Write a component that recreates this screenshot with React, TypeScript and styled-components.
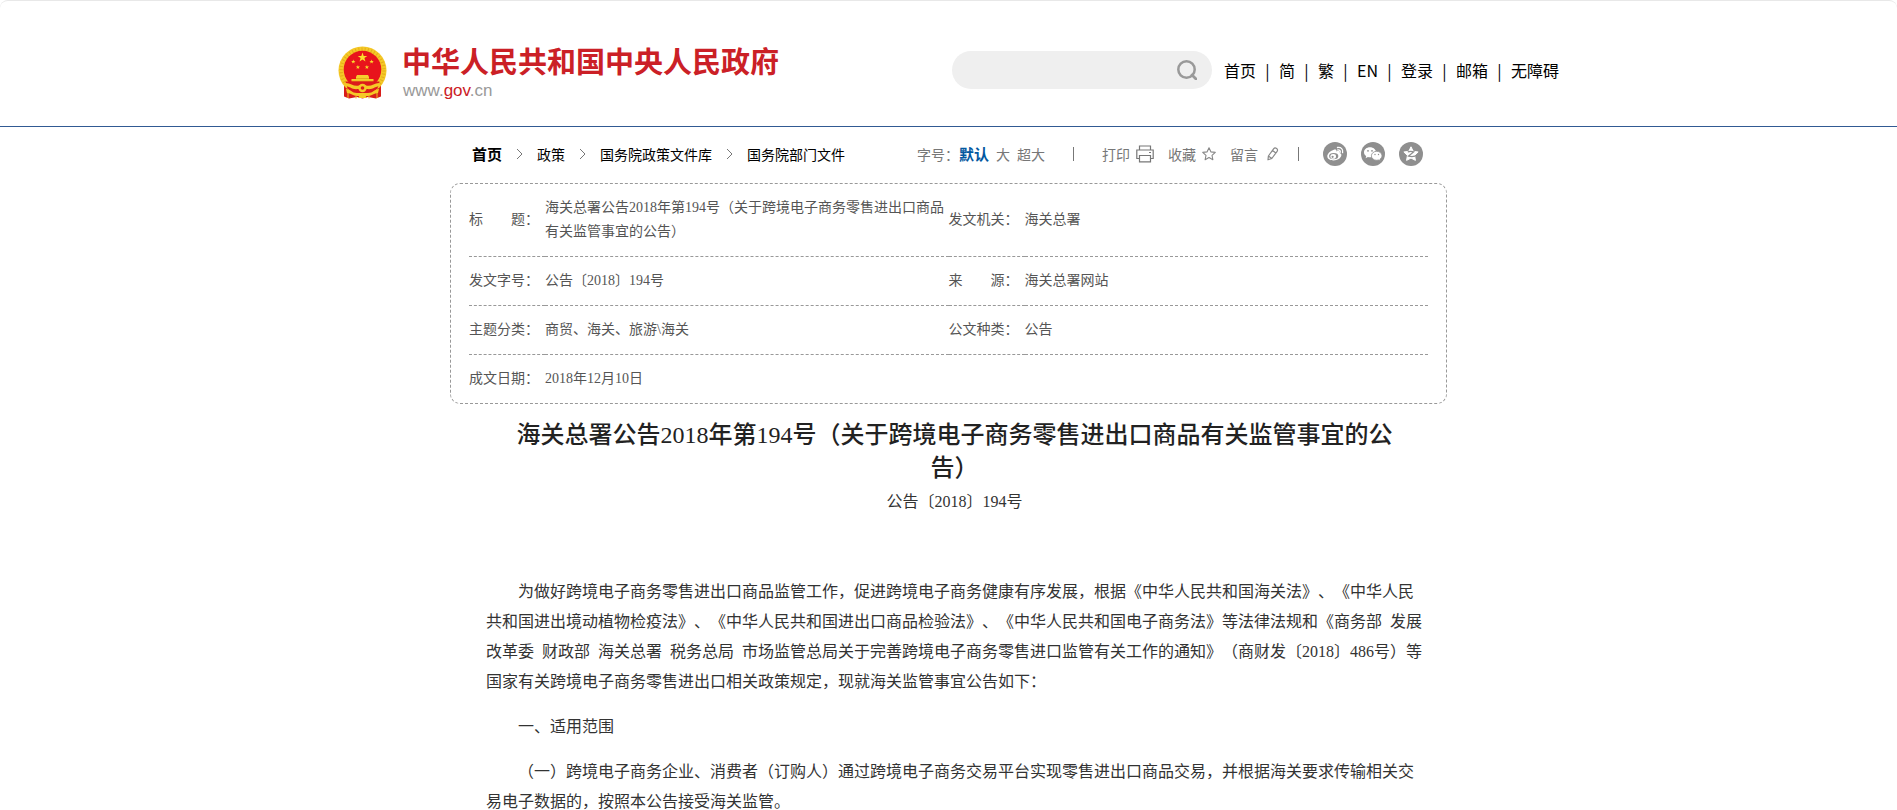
import React from 'react';
import styled, { createGlobalStyle } from 'styled-components';

const songti = `"Liberation Serif", "Noto Sans CJK SC", serif`;
const heiti = `"Noto Sans CJK SC", sans-serif`;

const GlobalStyle = createGlobalStyle`
  *, *::before, *::after { box-sizing: border-box; }
  body {
    margin: 0;
    background: #fff;
    color: #333;
    font-family: ${songti};
    text-spacing-trim: space-all;
  }
  a { color: inherit; text-decoration: none; }
  button, input {
    padding: 0;
    border: 0;
    background: none;
    color: inherit;
    font: inherit;
  }
  button { cursor: pointer; }
  h1, p { margin: 0; }
`;

const Page = styled.div`
  border-top: 1px solid #e8e8e8;
  border-top-left-radius: 8px;
  border-top-right-radius: 8px;
`;

const Header = styled.header`
  border-bottom: 1px solid #315a93;
`;

const HeaderInner = styled.div`
  display: flex;
  align-items: center;
  max-width: 1221px;
  height: 125px;
  margin: 0 auto;
  padding-top: 13px;
`;

const Brand = styled.a`
  display: flex;
  align-items: center;
  gap: 15px;
  padding-top: 5px;
`;

const BrandText = styled.span`
  display: flex;
  flex-direction: column;
  gap: 2px;
`;

const BrandName = styled.span`
  color: #cb2026;
  font: 700 29px/34px ${heiti};
`;

const BrandUrl = styled.span`
  padding-left: 1px;
  color: #999;
  font: 17px/24px "Liberation Sans", Arial, sans-serif;

  b { color: #cb2026; font-weight: 400; }
`;

const Search = styled.form`
  display: flex;
  align-items: center;
  width: 260px;
  height: 38px;
  margin-left: auto;
  padding: 0 15px;
  border-radius: 19px;
  background: #efefef;
`;

const SearchInput = styled.input`
  flex: 1;
  min-width: 0;
  outline: 0;
  font: 16px/24px ${heiti};
`;

const SearchButton = styled.button`
  display: flex;
`;

const TopNav = styled.nav`
  display: flex;
  margin-left: 12px;
  color: #000;
  font: 16px/24px ${heiti};
`;

const NavDivider = styled.span`
  width: 23px;
  text-align: center;
`;

const Main = styled.main`
  max-width: 997px;
  margin: 0 auto;
`;

const Toolbar = styled.div`
  display: flex;
  align-items: center;
  justify-content: space-between;
  height: 56px;
  padding: 0 24px 3px 22px;
  font: 14px/24px ${heiti};
`;

const Breadcrumb = styled.nav`
  display: flex;
  align-items: center;
  gap: 14px;
  color: #000;
`;

const Crumb = styled.a<{ $home?: boolean }>`
  font-size: ${(p) => (p.$home ? 15 : 14)}px;
  font-weight: ${(p) => (p.$home ? 700 : 400)};
`;

const Tools = styled.div`
  display: flex;
  align-items: center;
  color: #777;
`;

const SizeGroup = styled.div`
  display: flex;
  gap: 7px;
`;

const SizeLabel = styled.span`
  width: 35px;
  white-space: nowrap;
`;

const SizeButton = styled.button<{ $active?: boolean }>`
  color: ${(p) => (p.$active ? '#0358a0' : 'inherit')};
  font-size: ${(p) => (p.$active ? 15 : 14)}px;
  font-weight: ${(p) => (p.$active ? 700 : 400)};
`;

const ToolDivider = styled.span<{ $gap: number }>`
  width: 1px;
  height: 14px;
  margin: 0 ${(p) => p.$gap}px 0 28px;
  background: #777;
`;

const ActionGroup = styled.div`
  display: flex;
  gap: 14px;
  margin-right: -10px;
`;

const ActionButton = styled.button`
  display: flex;
  align-items: center;
  gap: 6px;
`;

const ShareGroup = styled.div`
  display: flex;
  gap: 14px;
`;

const ShareLink = styled.a`
  display: flex;
`;

const InfoCard = styled.section`
  padding: 0 18px;
  border: 1px dashed #999;
  border-radius: 10px;
`;

const InfoTable = styled.table`
  width: 100%;
  table-layout: fixed;
  border-collapse: collapse;
  color: #555;
  font: 14px/24px ${songti};

  tr:not(:last-child) > * { border-bottom: 1px dashed #999; }
`;

const InfoLabel = styled.th`
  width: 76px;
  padding: 12px 0;
  font-weight: 400;
  text-align: left;
  white-space: nowrap;
`;

const InfoValue = styled.td`
  padding: 12px 0;
`;

const Article = styled.article`
  padding: 15px 24px 30px 36px;
`;

const Title = styled.h1`
  padding: 0 20px;
  color: #222;
  font: 500 24px/33px ${songti};
  text-align: center;
`;

const DocNumber = styled.p`
  font-size: 16px;
  line-height: 33px;
  text-align: center;
`;

const Content = styled.div`
  display: flex;
  flex-direction: column;
  gap: 15px;
  padding-top: 59px;
  font-size: 16px;
  line-height: 30px;

  p { text-indent: 2em; }
`;

const starPoints = (cx: number, cy: number, r: number, inner = 0.4) =>
  Array.from({ length: 10 }, (_, i) => {
    const a = (Math.PI / 5) * i - Math.PI / 2;
    const d = i % 2 ? r * inner : r;
    return `${(cx + d * Math.cos(a)).toFixed(2)},${(cy + d * Math.sin(a)).toFixed(2)}`;
  }).join(' ');

const Emblem = () => (
  <svg width="49" height="53" viewBox="0 0 49 53" aria-hidden="true">
    <path d="M6 36v14.500l5 2 8-1.500 5.500 1.500 5.500-1.500 8 1.500 5-2V36z" fill="#d81e1b" />
    <circle cx="24.5" cy="24.5" r="24" fill="#f5c927" />
    <circle cx="24.5" cy="24.5" r="21.4" fill="none" stroke="#d9970f" strokeWidth="3.4" strokeDasharray="1 2.2" opacity=".55" />
    <circle cx="24.5" cy="23.5" r="18.8" fill="#e8141c" />
    <polygon points={starPoints(24.5, 11.5, 5)} fill="#fbe02c" />
    <polygon points={starPoints(15.3, 15.7, 2.3)} fill="#fbe02c" />
    <polygon points={starPoints(19.9, 21.2, 2.3)} fill="#fbe02c" />
    <polygon points={starPoints(28.9, 21.2, 2.3)} fill="#fbe02c" />
    <polygon points={starPoints(33.6, 15.7, 2.3)} fill="#fbe02c" />
    <path d="M19 29h11l1 2v2h4.500v2.500h-22V33H18v-2z" fill="#f6cf2e" />
    <path d="M18 32.500h13M14 35.200h21" stroke="#d9970f" strokeWidth=".6" />
    <path d="M7.500 35.500h34l-2 7-7 5.500h-16l-7-5.500z" fill="#dc1b1b" />
    <path d="M8 37c5 0 8 4 13 2.500 2-1.200 5-1.200 7 0 5 1.500 8-2.500 13-2.500l2 3c-6 0-8 4-14 3h-9c-6 1-8-3-14-3z" fill="#f5c927" />
    <circle cx="24.500" cy="42" r="4.200" fill="#f5c927" />
    <circle cx="24.500" cy="42" r="1.800" fill="#dc1b1b" />
    <path d="M8 43c4 0 6 4 11 4h11c5 0 7-4 11-4l-1 4c-4 0-6 3-10 3H19c-4 0-6-3-10-3z" fill="#f5c927" />
    <path d="M10 47v5M39 47v5M18 49.500v3M31 49.500v3" stroke="#f0b91f" strokeWidth="1" />
    <path d="M20 52l2-3h5l2 3z" fill="#f5c927" />
  </svg>
);

const SearchIcon = () => (
  <svg width="20" height="20" viewBox="0 0 20 20" fill="none" stroke="#999" aria-hidden="true">
    <circle cx="9.500" cy="9.500" r="8.200" strokeWidth="2.500" />
    <path d="m15 15 4 4" strokeWidth="2.800" strokeLinecap="round" />
  </svg>
);

const Chevron = () => (
  <svg width="7" height="12" viewBox="0 0 7 12" fill="none" stroke="#777" aria-hidden="true">
    <path d="m1 1 5 5-5 5" />
  </svg>
);

const PrintIcon = () => (
  <svg width="18" height="18" viewBox="0 0 18 18" fill="none" stroke="#777" strokeWidth="1.200" aria-hidden="true">
    <path d="M3.500 5V1h11v4M3.500 13.500H.8V5h16.400v8.500h-2.700" />
    <path d="M3.500 10.500h11v6.300h-11z" />
    <path d="M13 7.500h2" />
  </svg>
);

const StarIcon = () => (
  <svg width="14" height="14" viewBox="0 0 14 14" fill="none" stroke="#888" strokeWidth="1.100" strokeLinejoin="round" aria-hidden="true">
    <polygon points={starPoints(7, 7.400, 6.600, 0.48)} />
  </svg>
);

const PencilIcon = () => (
  <svg width="16" height="14" viewBox="0 0 16 14" fill="none" stroke="#888" strokeWidth="1.200" strokeLinejoin="round" aria-hidden="true">
    <path d="M4 12.800 4.400 9 9.600 1.800c.8-1.100 2-1.100 3-.4s1.300 1.900.5 3L7.800 11.500zM8.500 3.500l3.400 2.600M4.400 9l3.400 2.500" />
  </svg>
);

const WeiboIcon = () => (
  <svg width="24" height="24" viewBox="0 0 24 24" aria-hidden="true">
    <circle cx="12" cy="12" r="12" fill="#8f8f8f" />
    <path d="M10.300 8c2-1 3.600-.5 3.100 1.400 2-.8 4-.3 3.300 1.600 1.500.5 1.800 1.500 1.600 2.600-.4 2.600-3.800 4.800-7.700 4.800-3.700 0-6.300-1.700-6.300-4.200C4.300 12 7.200 8.900 10.300 8z" fill="#fff" />
    <ellipse cx="10.700" cy="14.100" rx="4.600" ry="3.200" fill="#8f8f8f" />
    <ellipse cx="10.200" cy="14.400" rx="2.800" ry="2.300" fill="#fff" />
    <circle cx="9.600" cy="14.800" r="1.100" fill="#8f8f8f" />
    <path d="M14.500 5.500c3.400-.7 6 2 5.100 5.200M14.800 8c1.700-.3 2.800.8 2.400 2.300" fill="none" stroke="#fff" strokeWidth="1.300" strokeLinecap="round" />
  </svg>
);

const WechatIcon = () => (
  <svg width="24" height="24" viewBox="0 0 24 24" aria-hidden="true">
    <circle cx="12" cy="12" r="12" fill="#8f8f8f" />
    <path d="M9 5.300c-3.400 0-6 2.200-6 5 0 1.600.8 2.900 2.200 3.900l-.6 2 2.300-1.200c.7.200 1.400.3 2.100.3 3.300 0 6-2.200 6-5s-2.700-5-6-5z" fill="#fff" />
    <path d="M15.700 9.300c-3 0-5.300 2-5.300 4.500s2.300 4.500 5.300 4.500c.6 0 1.200-.1 1.800-.3l1.900 1-.5-1.700c1.300-.9 2.100-2.100 2.100-3.500 0-2.500-2.400-4.500-5.300-4.500z" fill="#fff" stroke="#8f8f8f" strokeWidth=".8" />
    <g fill="#8f8f8f">
      <circle cx="7" cy="8.800" r=".9" />
      <circle cx="11" cy="8.800" r=".9" />
      <circle cx="14" cy="12.500" r=".7" />
      <circle cx="17.500" cy="12.500" r=".7" />
    </g>
  </svg>
);

const QzoneIcon = () => (
  <svg width="24" height="24" viewBox="0 0 24 24" aria-hidden="true">
    <circle cx="12" cy="12" r="12" fill="#8f8f8f" />
    <polygon points={starPoints(12, 12.300, 7.500, 0.5)} fill="#fff" stroke="#fff" strokeLinejoin="round" />
    <path d="M8.800 9.800c2-.5 4-.5 6 0l-5.200 4.300c2 .6 4.200.6 6.400.1" fill="none" stroke="#8f8f8f" strokeWidth="1.200" />
  </svg>
);

const navItems = ['首页', '简', '繁', 'EN', '登录', '邮箱', '无障碍'];
const crumbs = ['首页', '政策', '国务院政策文件库', '国务院部门文件'];

const infoRows = [
  ['标　　题：', '海关总署公告2018年第194号（关于跨境电子商务零售进出口商品有关监管事宜的公告）', '发文机关：', '海关总署'],
  ['发文字号：', '公告〔2018〕194号', '来　　源：', '海关总署网站'],
  ['主题分类：', '商贸、海关、旅游\\海关', '公文种类：', '公告'],
  ['成文日期：', '2018年12月10日'],
];

const paragraphs = [
  '为做好跨境电子商务零售进出口商品监管工作，促进跨境电子商务健康有序发展，根据《中华人民共和国海关法》、《中华人民共和国进出境动植物检疫法》、《中华人民共和国进出口商品检验法》、《中华人民共和国电子商务法》等法律法规和《商务部\u2002发展改革委\u2002财政部\u2002海关总署\u2002税务总局\u2002市场监管总局关于完善跨境电子商务零售进口监管有关工作的通知》（商财发〔2018〕486号）等国家有关跨境电子商务零售进出口相关政策规定，现就海关监管事宜公告如下：',
  '一、适用范围',
  '（一）跨境电子商务企业、消费者（订购人）通过跨境电子商务交易平台实现零售进出口商品交易，并根据海关要求传输相关交易电子数据的，按照本公告接受海关监管。',
];

export default function App() {
  return (
    <Page lang="zh-CN">
      <GlobalStyle />
      <Header>
        <HeaderInner>
          <Brand href="#">
            <Emblem />
            <BrandText>
              <BrandName>中华人民共和国中央人民政府</BrandName>
              <BrandUrl>www.<b>gov</b>.cn</BrandUrl>
            </BrandText>
          </Brand>
          <Search role="search">
            <SearchInput type="text" aria-label="搜索" />
            <SearchButton type="button" aria-label="搜索">
              <SearchIcon />
            </SearchButton>
          </Search>
          <TopNav>
            {navItems.map((item, i) => (
              <React.Fragment key={item}>
                {i > 0 && <NavDivider>|</NavDivider>}
                <a href="#">{item}</a>
              </React.Fragment>
            ))}
          </TopNav>
        </HeaderInner>
      </Header>

      <Main>
        <Toolbar>
          <Breadcrumb>
            {crumbs.map((item, i) => (
              <React.Fragment key={item}>
                {i > 0 && <Chevron />}
                <Crumb href="#" $home={i === 0}>{item}</Crumb>
              </React.Fragment>
            ))}
          </Breadcrumb>
          <Tools>
            <SizeGroup>
              <SizeLabel>字号：</SizeLabel>
              <SizeButton type="button" $active>默认</SizeButton>
              <SizeButton type="button">大</SizeButton>
              <SizeButton type="button">超大</SizeButton>
            </SizeGroup>
            <ToolDivider $gap={28} />
            <ActionGroup>
              <ActionButton type="button">打印<PrintIcon /></ActionButton>
              <ActionButton type="button">收藏<StarIcon /></ActionButton>
              <ActionButton type="button">留言<PencilIcon /></ActionButton>
            </ActionGroup>
            <ToolDivider $gap={24} />
            <ShareGroup>
              <ShareLink href="#" aria-label="微博"><WeiboIcon /></ShareLink>
              <ShareLink href="#" aria-label="微信"><WechatIcon /></ShareLink>
              <ShareLink href="#" aria-label="QQ空间"><QzoneIcon /></ShareLink>
            </ShareGroup>
          </Tools>
        </Toolbar>

        <InfoCard>
          <InfoTable>
            <tbody>
              {infoRows.map(([label, value, label2, value2]) => (
                <tr key={label}>
                  <InfoLabel scope="row">{label}</InfoLabel>
                  <InfoValue colSpan={label2 ? 1 : 3}>{value}</InfoValue>
                  {label2 && <InfoLabel scope="row">{label2}</InfoLabel>}
                  {label2 && <InfoValue>{value2}</InfoValue>}
                </tr>
              ))}
            </tbody>
          </InfoTable>
        </InfoCard>

        <Article>
          <Title>海关总署公告2018年第194号（关于跨境电子商务零售进出口商品有关监管事宜的公告）</Title>
          <DocNumber>公告〔2018〕194号</DocNumber>
          <Content>
            {paragraphs.map((text) => (
              <p key={text}>{text}</p>
            ))}
          </Content>
        </Article>
      </Main>
    </Page>
  );
}
